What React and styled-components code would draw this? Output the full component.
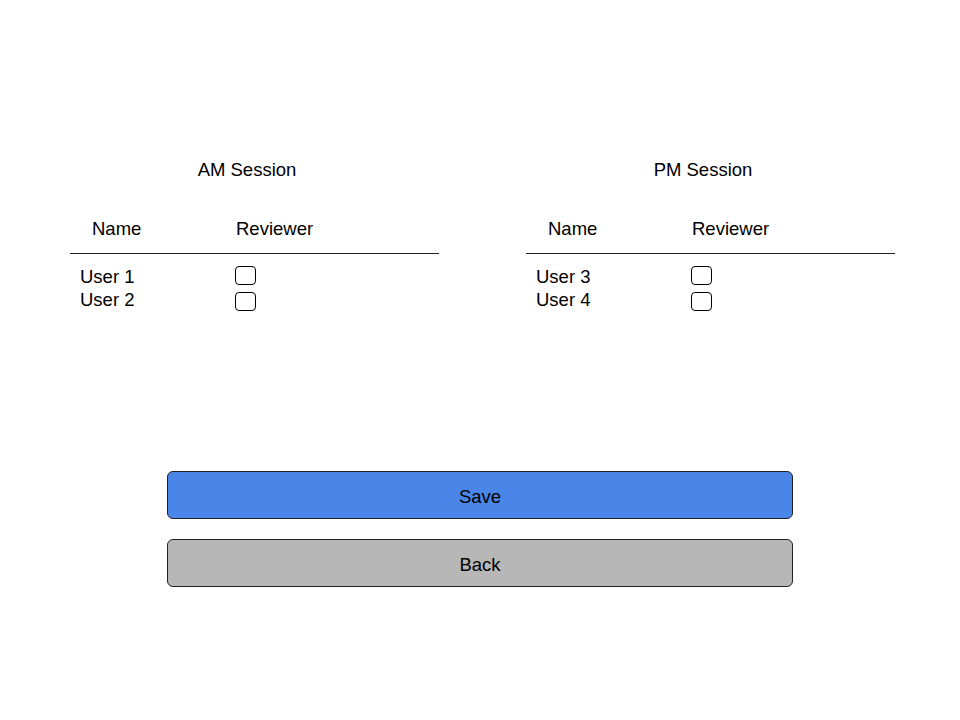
import React from 'react';
import styled, { createGlobalStyle } from 'styled-components';

const GlobalStyle = createGlobalStyle`
    body {
        margin: 0;
        background: #fff;
        font-family: "Liberation Sans", Arial, sans-serif;
        color: #000;
    }
`;

const Page = styled.div`
    width: 960px;
    height: 720px;
    box-sizing: border-box;
    padding-top: 159px;
    display: flex;
    flex-direction: column;
`;

const Sessions = styled.div`
    display: flex;
    gap: 87px;
    padding-left: 70px;
`;

const Panel = styled.section`
    width: 369px;
    display: flex;
    flex-direction: column;
`;

const Title = styled.h2`
    margin: 0;
    font-size: 18.5px;
    font-weight: normal;
    line-height: 22px;
    text-align: center;
    width: 354px;
`;

const HeaderRow = styled.div`
    display: flex;
    margin-top: 37px;
    padding-bottom: 13px;
    border-bottom: 1px solid #222;
    font-size: 18.5px;
    line-height: 22px;
`;

const HeaderCell = styled.div`
    box-sizing: border-box;
    width: ${({ width }) => width}px;
    padding-left: ${({ indent }) => indent}px;
`;

const Rows = styled.div`
    display: flex;
`;

const NameList = styled.div`
    box-sizing: border-box;
    width: 165px;
    padding-left: 10px;
    padding-top: 11px;
    font-size: 18.5px;
    line-height: 23px;
`;

const CheckList = styled.div`
    display: flex;
    flex-direction: column;
    gap: 7px;
    padding-top: 12px;
`;

const Checkbox = styled.input.attrs({ type: 'checkbox' })`
    appearance: none;
    margin: 0;
    width: 21px;
    height: 19px;
    box-sizing: border-box;
    border: 1px solid #000;
    border-radius: 4px;
    background: #fff;
    cursor: pointer;

    &:checked {
        background: #4a86e8;
    }
`;

const Actions = styled.div`
    margin-top: 160px;
    display: flex;
    flex-direction: column;
    align-items: center;
    gap: 20px;
`;

const Button = styled.button`
    width: 626px;
    height: 48px;
    box-sizing: border-box;
    padding-top: 5px;
    border: 1px solid #222;
    border-radius: 6px;
    background: ${({ primary }) => (primary ? '#4a86e8' : '#b7b7b7')};
    font-family: "Liberation Sans", Arial, sans-serif;
    font-size: 18.5px;
    color: #000;
    cursor: pointer;
`;

const sessions = [
    { title: 'AM Session', users: ['User 1', 'User 2'] },
    { title: 'PM Session', users: ['User 3', 'User 4'] },
];

function Session({ title, users }) {
    return (
        <Panel>
            <Title>{title}</Title>
            <HeaderRow>
                <HeaderCell width={166} indent={22}>Name</HeaderCell>
                <HeaderCell width={150} indent={0}>Reviewer</HeaderCell>
            </HeaderRow>
            <Rows>
                <NameList>
                    {users.map((u) => <div key={u}>{u}</div>)}
                </NameList>
                <CheckList>
                    {users.map((u) => <Checkbox key={u} aria-label={u} />)}
                </CheckList>
            </Rows>
        </Panel>
    );
}

export default function App() {
    return (
        <>
            <GlobalStyle />
            <Page>
                <Sessions>
                    {sessions.map((s) => <Session key={s.title} {...s} />)}
                </Sessions>
                <Actions>
                    <Button primary>Save</Button>
                    <Button>Back</Button>
                </Actions>
            </Page>
        </>
    );
}
